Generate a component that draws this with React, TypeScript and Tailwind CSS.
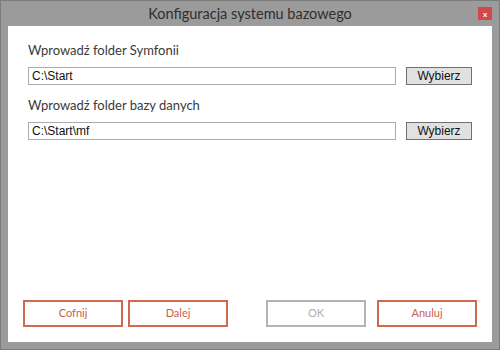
const FolderRow = ({ label, value }: { label: string; value: string }) => (
  <div className="flex flex-col mb-[11px]">
    <div className="h-[18px] leading-[18px] text-[13px] text-[#3a3a3a] mb-[8px]">{label}</div>
    <div className="flex items-center gap-[10px]">
      <div className="flex-1 h-[18px] border border-[#ababab] bg-white px-[3px] text-[12px] leading-[16px] text-[#111] font-['Liberation_Sans',sans-serif]">
        {value}
      </div>
      <button className="w-[66px] h-[18px] border border-[#707070] bg-[#e1e1e1] text-[12px] leading-[16px] text-[#111] font-['Liberation_Sans',sans-serif]">
        Wybierz
      </button>
    </div>
  </div>
);

const FooterButton = ({ children, disabled }: { children: string; disabled?: boolean }) => (
  <button
    className={
      disabled
        ? 'w-[100px] h-[27px] border-2 border-[#b4b4b4] bg-white text-[11px] text-[#b0b0b0]'
        : 'w-[100px] h-[27px] border-2 border-[#cf6a51] bg-white text-[11px] text-[#c8614c]'
    }
  >
    {children}
  </button>
);

export default function App() {
  return (
    <div className="w-[500px] h-[350px] flex flex-col bg-[#9b9b9b] border border-[#7c7c7c] font-['Lato',sans-serif]">
      {/* title bar */}
      <div className="relative h-[25px] flex items-center justify-center">
        <span className="text-[14.5px] text-[#2e2e2e]">Konfiguracja systemu bazowego</span>
        <div className="absolute right-[7px] top-[6px] w-[14px] h-[13px] bg-[#d2474e] flex items-center justify-center">
          <span className="text-white text-[8px] leading-none font-bold">x</span>
        </div>
      </div>

      <div className="flex-1 mx-[7px] mb-[7px] bg-white flex flex-col">
        <div className="pt-[15px] pl-[20px] pr-[20px]">
          <FolderRow label="Wprowadź folder Symfonii" value="C:\Start" />
          <FolderRow label="Wprowadź folder bazy danych" value="C:\Start\mf" />
        </div>

        <div className="mt-auto flex items-center justify-between px-[15px] pb-[15px]">
          <div className="flex gap-[5px]">
            <FooterButton>Cofnij</FooterButton>
            <FooterButton>Dalej</FooterButton>
          </div>
          <div className="flex gap-[11px]">
            <FooterButton disabled>OK</FooterButton>
            <FooterButton>Anuluj</FooterButton>
          </div>
        </div>
      </div>
    </div>
  );
}
